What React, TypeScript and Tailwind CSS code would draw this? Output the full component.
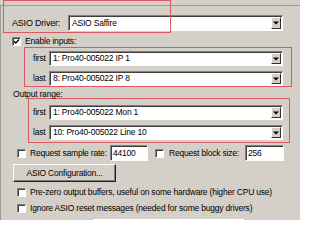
import React from "react";

const sunken =
  "border-t border-l border-t-[#808080] border-l-[#808080] border-b border-r border-b-white border-r-white shadow-[inset_1px_1px_0_#404040]";

const Arrow = () => (
  <svg width="6" height="4" viewBox="0 0 6 4">
    <path d="M0 0.5h6L3 3.5z" fill="#000" />
  </svg>
);

const Combo = ({ text, w, h = 15 }: { text: string; w: number; h?: number }) => (
  <div
    className={`flex items-stretch bg-white ${sunken}`}
    style={{ width: w, height: h }}
  >
    <span className="flex-1 pl-[3px] flex items-center whitespace-nowrap overflow-hidden">
      {text}
    </span>
    <div className="w-[10px] m-[1px] bg-[#d4d0c8] border-t border-l border-t-white border-l-white border-b border-r border-b-[#303030] border-r-[#303030] flex items-center justify-center">
      <Arrow />
    </div>
  </div>
);

const Check = ({ checked = false }: { checked?: boolean }) => (
  <div className={`w-[9px] h-[9px] bg-white shrink-0 flex items-center justify-center ${sunken}`}>
    {checked && (
      <svg width="7" height="7" viewBox="0 0 7 7">
        <path d="M1 3.2l1.8 1.8L6 1.5" stroke="#000" strokeWidth="1.3" fill="none" />
      </svg>
    )}
  </div>
);

const TextBox = ({ value, w }: { value: string; w: number }) => (
  <div
    className={`h-[16px] bg-white pl-[2px] flex items-center shrink-0 ${sunken}`}
    style={{ width: w }}
  >
    {value}
  </div>
);

export default function App() {
  return (
    <div
      className="relative w-[300px] h-[220px] overflow-hidden bg-[#d4d0c8] text-black text-[8.5px] tracking-[-0.2px] leading-none whitespace-nowrap"
      style={{ fontFamily: '"Liberation Sans", Arial, sans-serif' }}
    >
      {/* group frame */}
      <div className="mt-[5px] border-t border-l border-[#a09c96] h-[215px]">
        {/* ASIO driver */}
        <div className="mt-[9px] pl-[11px] flex items-center h-[16px]">
          <span className="w-[56px] text-[9px]">ASIO Driver:</span>
          <Combo text="ASIO Saffire" w={215} h={16} />
        </div>

        {/* enable inputs */}
        <div className="mt-[6px] pl-[11px] flex items-center gap-[4px] h-[9px]">
          <Check checked />
          <span>Enable inputs:</span>
        </div>

        <div className="mt-[1px] ml-[23px] w-[268px] h-[40px] border border-[#dc5a66] pt-[3px] flex flex-col gap-[5px]">
          <div className="flex items-center pl-[8px]">
            <span className="w-[16px]">first</span>
            <Combo text="1: Pro40-005022 IP 1" w={234} />
          </div>
          <div className="flex items-center pl-[8px]">
            <span className="w-[16px]">last</span>
            <Combo text="8: Pro40-005022 IP 8" w={234} />
          </div>
        </div>

        {/* output range */}
        <div className="mt-[3px] pl-[12px] h-[8px] leading-[8px]">Output range:</div>

        <div className="ml-[27px] w-[262px] h-[45px] border border-[#dc5a66] pt-[6px] flex flex-col gap-[5px]">
          <div className="flex items-center pl-[4px]">
            <span className="w-[16px]">first</span>
            <Combo text="1: Pro40-005022 Mon 1" w={234} />
          </div>
          <div className="flex items-center pl-[4px]">
            <span className="w-[16px]">last</span>
            <Combo text="10: Pro40-005022 Line 10" w={234} />
          </div>
        </div>

        {/* sample rate / block size */}
        <div className="mt-[2px] pl-[16px] flex items-center h-[16px]">
          <Check />
          <span className="ml-[4px] w-[80px]">Request sample rate:</span>
          <TextBox value="44100" w={38} />
          <div className="ml-[7px]">
            <Check />
          </div>
          <span className="ml-[5px] w-[76px]">Request block size:</span>
          <TextBox value="256" w={39} />
        </div>

        <button className="mt-[3px] ml-[12px] w-[103px] h-[18px] bg-[#d4d0c8] border-t border-l border-t-white border-l-white border-b border-r border-b-[#202020] border-r-[#202020] shadow-[inset_-1px_-1px_0_#808080] flex items-center justify-center">
          ASIO Configuration...
        </button>

        <div className="mt-[4px] pl-[16px] flex items-center gap-[4px] h-[12px]">
          <Check />
          <span>Pre-zero output buffers, useful on some hardware (higher CPU use)</span>
        </div>
        <div className="mt-[4px] pl-[16px] flex items-center gap-[4px] h-[12px]">
          <Check />
          <span>Ignore ASIO reset messages (needed for some buggy drivers)</span>
        </div>

        <div className="mt-[5px] ml-[92px] w-[153px] h-[10px] bg-[#d4d0c8] border-t border-l border-t-white border-l-white border-r border-r-[#202020]" />
      </div>

      {/* highlight around driver label */}
      <div className="absolute left-[3px] top-0 w-[168px] h-[33px] border border-[#dc5a66]" />
    </div>
  );
}
